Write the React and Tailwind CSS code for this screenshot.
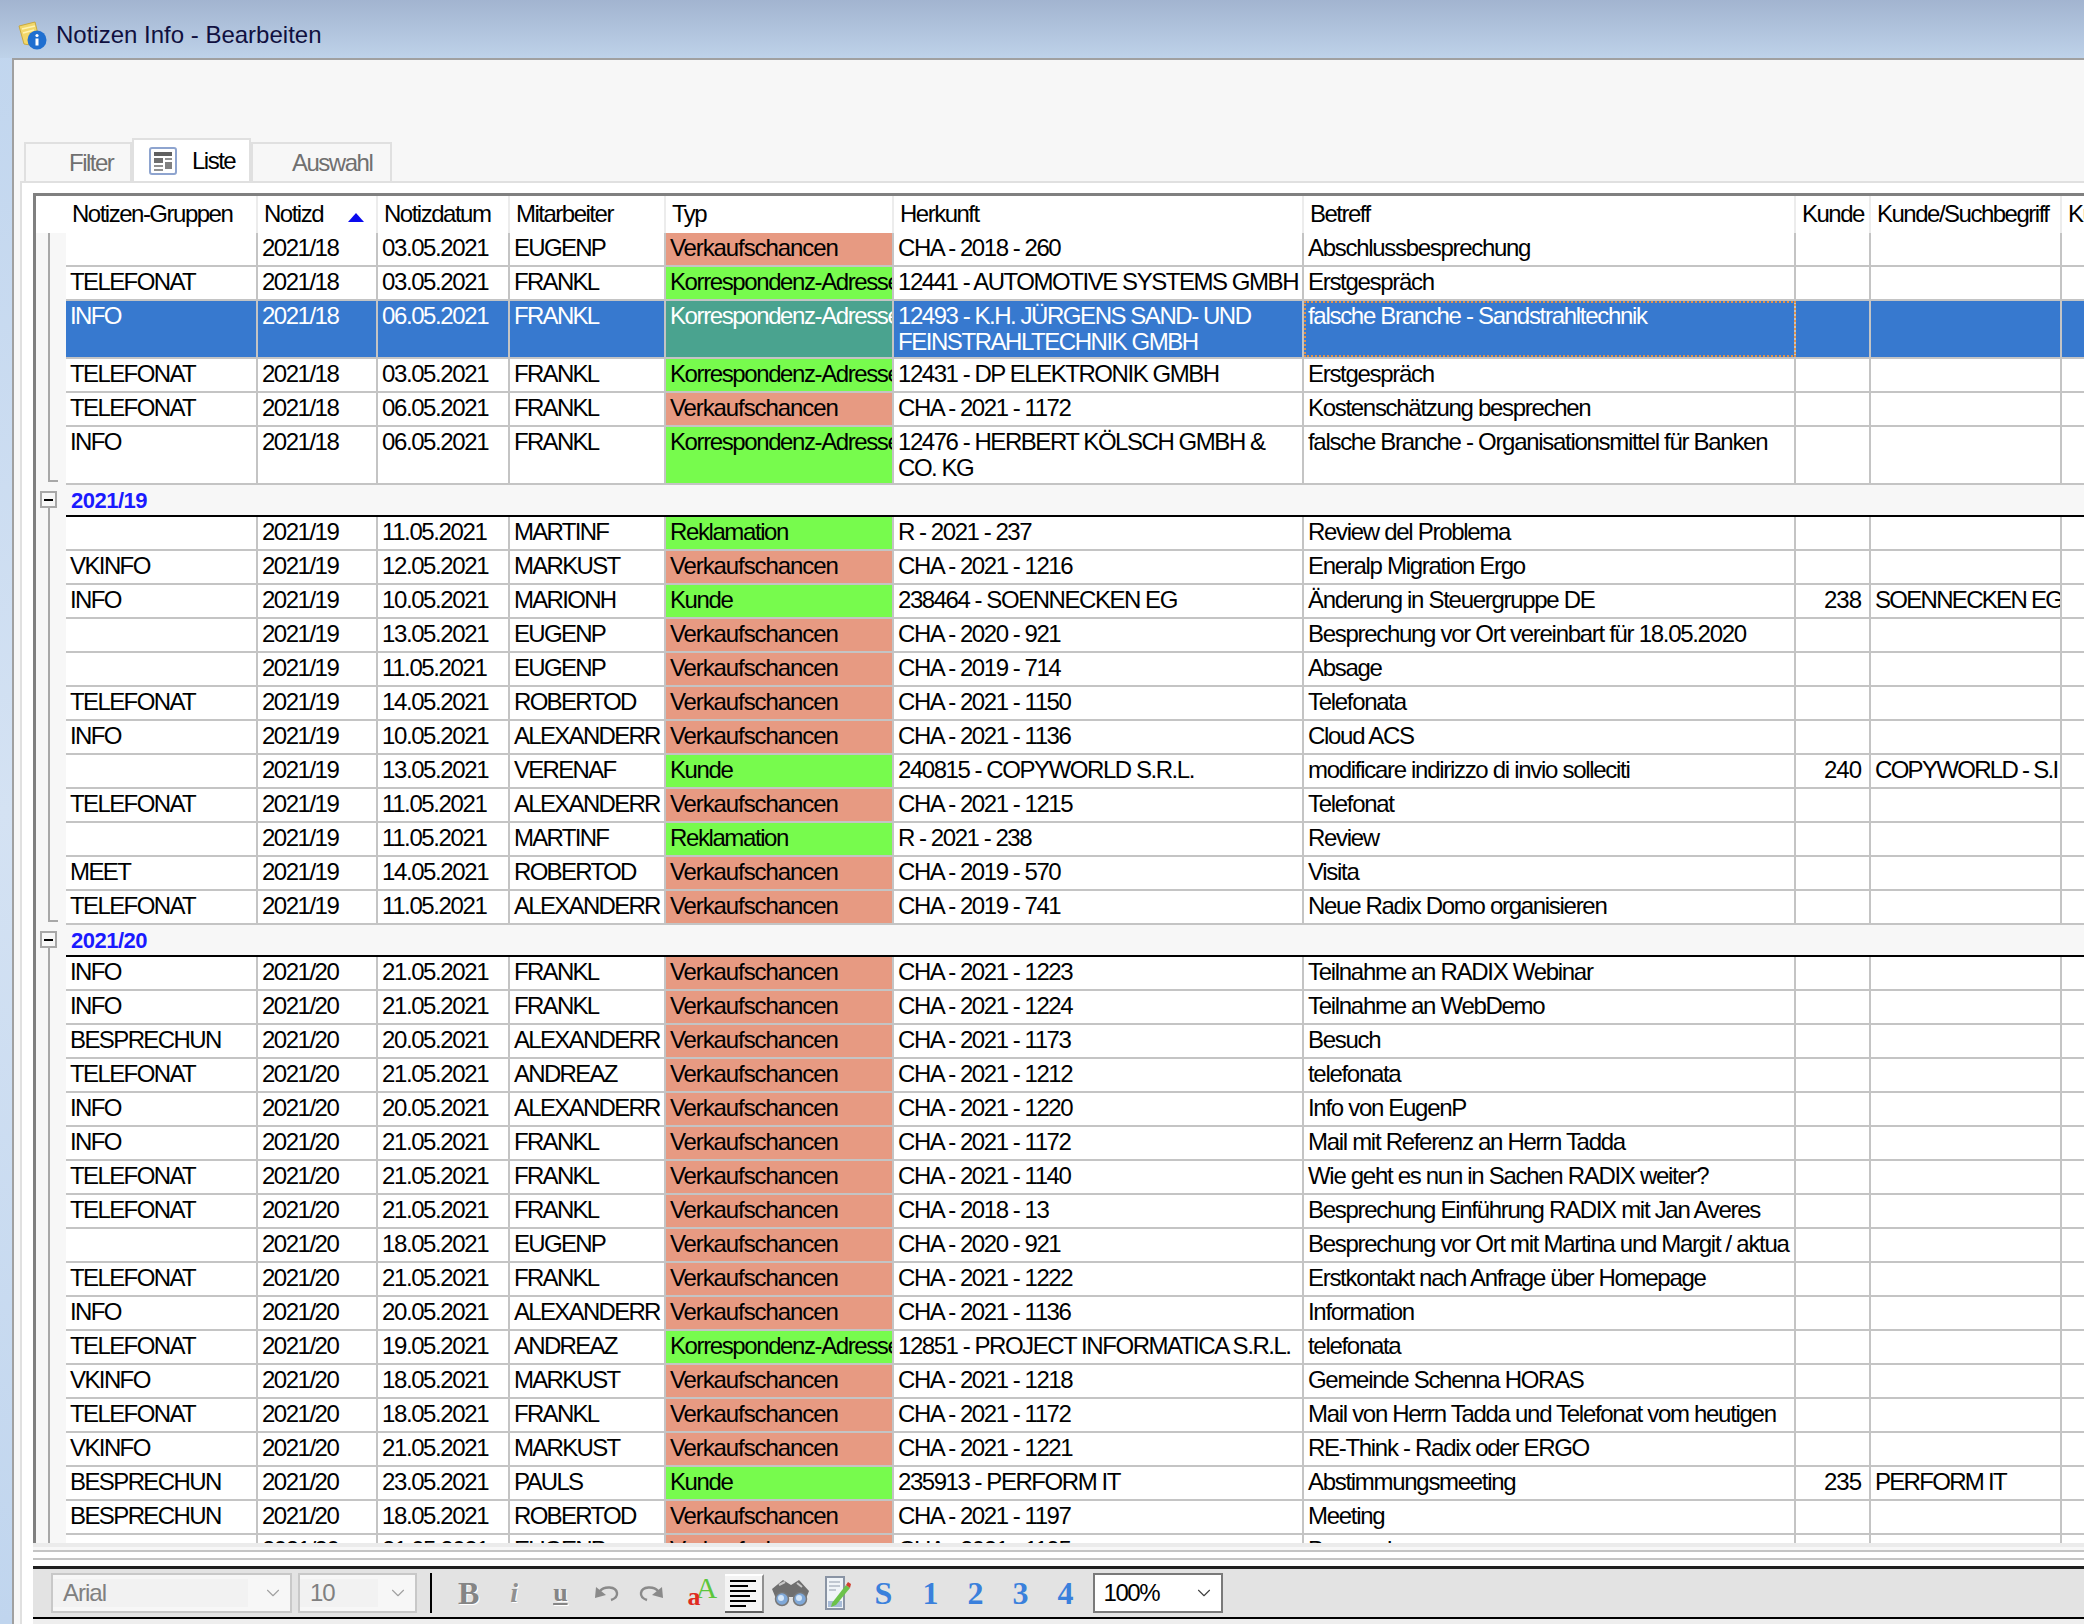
import React from 'react';
import { ChevronDown } from 'lucide-react';

const COLS = 'grid grid-cols-[192px_120px_132px_156px_228px_410px_492px_75px_191px_minmax(0,1fr)]';
const TEXT = "font-['Liberation_Sans',Arial,sans-serif] text-[24px] tracking-[-1px] leading-[26px]";

const V = 'Verkaufschancen';
const K = 'Korrespondenz-Adresse';
const R = 'Reklamation';
const U = 'Kunde';

const group18 = [
  ['', '2021/18', '03.05.2021', 'EUGENP', V, 'CHA - 2018 - 260', 'Abschlussbesprechung'],
  ['TELEFONAT', '2021/18', '03.05.2021', 'FRANKL', K, '12441 - AUTOMOTIVE SYSTEMS GMBH', 'Erstgespräch'],
  ['INFO', '2021/18', '06.05.2021', 'FRANKL', K, '12493 - K.H. JÜRGENS SAND- UND\nFEINSTRAHLTECHNIK GMBH', 'falsche Branche - Sandstrahltechnik'],
  ['TELEFONAT', '2021/18', '03.05.2021', 'FRANKL', K, '12431 - DP ELEKTRONIK GMBH', 'Erstgespräch'],
  ['TELEFONAT', '2021/18', '06.05.2021', 'FRANKL', V, 'CHA - 2021 - 1172', 'Kostenschätzung besprechen'],
  ['INFO', '2021/18', '06.05.2021', 'FRANKL', K, '12476 - HERBERT KÖLSCH GMBH &\nCO. KG', 'falsche Branche - Organisationsmittel für Banken'],
];

const group19 = [
  ['', '2021/19', '11.05.2021', 'MARTINF', R, 'R - 2021 - 237', 'Review del Problema'],
  ['VKINFO', '2021/19', '12.05.2021', 'MARKUST', V, 'CHA - 2021 - 1216', 'Eneralp Migration Ergo'],
  ['INFO', '2021/19', '10.05.2021', 'MARIONH', U, '238464 - SOENNECKEN EG', 'Änderung in Steuergruppe DE', '238', 'SOENNECKEN EG'],
  ['', '2021/19', '13.05.2021', 'EUGENP', V, 'CHA - 2020 - 921', 'Besprechung vor Ort vereinbart für 18.05.2020'],
  ['', '2021/19', '11.05.2021', 'EUGENP', V, 'CHA - 2019 - 714', 'Absage'],
  ['TELEFONAT', '2021/19', '14.05.2021', 'ROBERTOD', V, 'CHA - 2021 - 1150', 'Telefonata'],
  ['INFO', '2021/19', '10.05.2021', 'ALEXANDERR', V, 'CHA - 2021 - 1136', 'Cloud ACS'],
  ['', '2021/19', '13.05.2021', 'VERENAF', U, '240815 - COPYWORLD S.R.L.', 'modificare indirizzo di invio solleciti', '240', 'COPYWORLD - S.I'],
  ['TELEFONAT', '2021/19', '11.05.2021', 'ALEXANDERR', V, 'CHA - 2021 - 1215', 'Telefonat'],
  ['', '2021/19', '11.05.2021', 'MARTINF', R, 'R - 2021 - 238', 'Review'],
  ['MEET', '2021/19', '14.05.2021', 'ROBERTOD', V, 'CHA - 2019 - 570', 'Visita'],
  ['TELEFONAT', '2021/19', '11.05.2021', 'ALEXANDERR', V, 'CHA - 2019 - 741', 'Neue Radix Domo organisieren'],
];

const group20 = [
  ['INFO', '2021/20', '21.05.2021', 'FRANKL', V, 'CHA - 2021 - 1223', 'Teilnahme an RADIX Webinar'],
  ['INFO', '2021/20', '21.05.2021', 'FRANKL', V, 'CHA - 2021 - 1224', 'Teilnahme an WebDemo'],
  ['BESPRECHUN', '2021/20', '20.05.2021', 'ALEXANDERR', V, 'CHA - 2021 - 1173', 'Besuch'],
  ['TELEFONAT', '2021/20', '21.05.2021', 'ANDREAZ', V, 'CHA - 2021 - 1212', 'telefonata'],
  ['INFO', '2021/20', '20.05.2021', 'ALEXANDERR', V, 'CHA - 2021 - 1220', 'Info von EugenP'],
  ['INFO', '2021/20', '21.05.2021', 'FRANKL', V, 'CHA - 2021 - 1172', 'Mail mit Referenz an Herrn Tadda'],
  ['TELEFONAT', '2021/20', '21.05.2021', 'FRANKL', V, 'CHA - 2021 - 1140', 'Wie geht es nun in Sachen RADIX weiter?'],
  ['TELEFONAT', '2021/20', '21.05.2021', 'FRANKL', V, 'CHA - 2018 - 13', 'Besprechung Einführung RADIX mit Jan Averes'],
  ['', '2021/20', '18.05.2021', 'EUGENP', V, 'CHA - 2020 - 921', 'Besprechung vor Ort mit Martina und Margit / aktua'],
  ['TELEFONAT', '2021/20', '21.05.2021', 'FRANKL', V, 'CHA - 2021 - 1222', 'Erstkontakt nach Anfrage über Homepage'],
  ['INFO', '2021/20', '20.05.2021', 'ALEXANDERR', V, 'CHA - 2021 - 1136', 'Information'],
  ['TELEFONAT', '2021/20', '19.05.2021', 'ANDREAZ', K, '12851 - PROJECT INFORMATICA S.R.L.', 'telefonata'],
  ['VKINFO', '2021/20', '18.05.2021', 'MARKUST', V, 'CHA - 2021 - 1218', 'Gemeinde Schenna HORAS'],
  ['TELEFONAT', '2021/20', '18.05.2021', 'FRANKL', V, 'CHA - 2021 - 1172', 'Mail von Herrn Tadda und Telefonat vom heutigen'],
  ['VKINFO', '2021/20', '21.05.2021', 'MARKUST', V, 'CHA - 2021 - 1221', 'RE-Think - Radix oder ERGO'],
  ['BESPRECHUN', '2021/20', '23.05.2021', 'PAULS', U, '235913 - PERFORM IT', 'Abstimmungsmeeting', '235', 'PERFORM IT'],
  ['BESPRECHUN', '2021/20', '18.05.2021', 'ROBERTOD', V, 'CHA - 2021 - 1197', 'Meeting'],
  ['', '2021/20', '21.05.2021', 'EUGENP', V, 'CHA - 2021 - 1195', 'Besprechung'],
];

const Cell = ({ children, className = '' }) => (
  <div className={`overflow-hidden whitespace-pre border-r-2 border-[#c4c4c4] pl-[4px] pt-[2px] ${className}`}>{children}</div>
);

const typColor = (typ, selected) => {
  if (selected) return 'bg-[#4aa38f]';
  return typ === V ? 'bg-[#e79a82]' : 'bg-[#77fb4d]';
};

const Row = ({ row, selected, last, continued }) => {
  const tall = row[5].includes('\n');
  return (
    <div className={`flex ${tall ? 'h-[58px]' : 'h-[34px]'}`}>
      <div className="w-[30px] shrink-0 bg-[#f7f7f7] pl-[12px]">
        {last ? (
          <div className="h-[calc(100%-3px)] w-[10px] border-b-2 border-l-2 border-[#a8a8a8]" />
        ) : (
          continued && <div className="h-full w-[2px] bg-[#a8a8a8]" />
        )}
      </div>
      <div className={`${COLS} flex-1 border-b-2 border-[#c4c4c4] ${selected ? 'bg-[#3779cf] text-white' : 'bg-white text-black'}`}>
        <Cell className="tracking-[-1.6px]">{row[0]}</Cell>
        <Cell className="tracking-[-1.5px]">{row[1]}</Cell>
        <Cell className="tracking-[-1.4px]">{row[2]}</Cell>
        <Cell className="tracking-[-1.7px]">{row[3]}</Cell>
        <Cell className={`${typColor(row[4], selected)} ${row[4] === V ? 'tracking-[-1.1px]' : 'tracking-[-1.4px]'}`}>{row[4]}</Cell>
        <Cell className="tracking-[-1.45px]">{row[5]}</Cell>
        <Cell className={`tracking-[-1.3px] ${selected ? 'outline-2 -outline-offset-2 outline-dotted outline-[#e0924a]' : ''}`}>{row[6]}</Cell>
        <Cell className="pl-[28px]">{row[7]}</Cell>
        <Cell className="pl-[2px] tracking-[-1.7px]">{row[8]}</Cell>
        <div />
      </div>
    </div>
  );
};

const GroupHead = ({ label }) => (
  <div className="flex h-[32px]">
    <div className="flex w-[30px] shrink-0 flex-col bg-[#f7f7f7] pl-[4px] pt-[6px]">
      <div className="flex h-[17px] w-[17px] items-center justify-center border-2 border-[#a8a8a8] bg-[#f7f7f7]">
        <div className="h-[2px] w-[9px] bg-black" />
      </div>
      <div className="ml-[8px] w-[2px] flex-1 bg-[#a8a8a8]" />
    </div>
    <div className="flex-1 border-b-2 border-black bg-[#f7f7f7] pl-[5px] pt-[3px] font-bold text-[22px] leading-[26px] tracking-[-0.5px] text-[#1a1aff]">
      {label}
    </div>
  </div>
);

const headers = ['Notizen-Gruppen', 'Notizd', 'Notizdatum', 'Mitarbeiter', 'Typ', 'Herkunft', 'Betreff', 'Kunde', 'Kunde/Suchbegriff', 'Kunde'];

const GridHeader = () => (
  <div className="flex h-[37px] bg-white tracking-[-1.5px]">
    <div className="w-[30px] shrink-0" />
    <div className={`${COLS} flex-1`}>
      {headers.map((h, i) => (
        <div key={i} className="relative overflow-hidden whitespace-pre border-r-2 border-[#ececec] pl-[6px] pt-[5px] last:border-r-0">
          {h}
          {i === 1 && (
            <svg className="absolute left-[90px] top-[17px]" width="16" height="9" viewBox="0 0 16 9">
              <path d="M8 0 L16 9 L0 9 Z" fill="#0a0aee" />
            </svg>
          )}
        </div>
      ))}
    </div>
  </div>
);

const NoteIcon = () => (
  <svg width="30" height="30" viewBox="0 0 30 30" className="shrink-0">
    <path d="M1 6 L17 2 L20 14 L12 25 L6 24 Z" fill="#f1d76a" stroke="#c9a93f" />
    <path d="M4 9 L17 6 M5 13 L16 10" stroke="#fff3b0" strokeWidth="1.5" />
    <circle cx="19" cy="20" r="9.5" fill="#1f6fd0" />
    <circle cx="19" cy="15.5" r="1.6" fill="#fff" />
    <rect x="17.5" y="18.5" width="3" height="7" fill="#fff" />
  </svg>
);

const ListIcon = () => (
  <svg width="28" height="28" viewBox="0 0 28 28">
    <rect x="1" y="1" width="26" height="26" rx="2" fill="#fff" stroke="#8ea4cf" strokeWidth="2" />
    <rect x="5" y="5" width="18" height="4" fill="#606060" />
    <rect x="5" y="11" width="9" height="5" fill="#707070" />
    <rect x="16" y="11" width="7" height="2" fill="#909090" />
    <rect x="16" y="15" width="7" height="7" fill="#808080" />
    <rect x="5" y="18" width="9" height="2" fill="#909090" />
    <rect x="5" y="22" width="9" height="2" fill="#909090" />
  </svg>
);

const Tab = ({ label, className, children }) => (
  <div className={`flex items-center border-x-2 border-t-2 border-[#e0e0e0] tracking-[-1.5px] ${className}`}>
    {children}
    {label}
  </div>
);

const Combo = ({ label, className, inner, dim }) => (
  <div className={`flex h-[40px] items-center justify-between ${className}`}>
    <div className={`flex h-[28px] items-center ${inner}`}>{label}</div>
    <ChevronDown size={22} strokeWidth={1.2} className={dim ? 'mr-[6px] text-[#a0a0a0]' : 'mr-[6px] text-[#404040]'} />
  </div>
);

const Undo = ({ flip }) => (
  <svg width="26" height="20" viewBox="0 0 26 20" className={flip ? '-scale-x-100' : ''}>
    <path d="M6 8 C10 3 22 3 23 10 C23.5 14 20 16 17 17" fill="none" stroke="#8a8a8a" strokeWidth="2.4" />
    <path d="M1 15 L2 4 L12 12 Z" fill="#8a8a8a" />
  </svg>
);

const Binoculars = () => (
  <svg width="42" height="32" viewBox="0 0 42 32">
    <path d="M3 12 L14 3 L22 8 L30 3 L40 14 L36 24 L26 20 L18 20 L8 24 Z" fill="#6f6f6f" />
    <path d="M10 8 L16 5 M28 6 L33 10" stroke="#c8c8c8" strokeWidth="2" />
    <circle cx="13" cy="22" r="6.5" fill="#7fa8d8" stroke="#777" strokeWidth="1.5" />
    <circle cx="31" cy="22" r="6.5" fill="#7fa8d8" stroke="#777" strokeWidth="1.5" />
    <circle cx="12" cy="21" r="3" fill="#d4e6f8" />
    <circle cx="30" cy="21" r="3" fill="#d4e6f8" />
  </svg>
);

const DocPencil = () => (
  <svg width="28" height="36" viewBox="0 0 28 36">
    <path d="M2 2 H20 V34 H2 Z" fill="#f0f4f8" stroke="#8a94a4" strokeWidth="2" />
    <path d="M5 7 H16 M5 11 H16 M5 15 H12" stroke="#b0b8c4" strokeWidth="1.5" />
    <rect x="4" y="26" width="14" height="6" fill="#a8bcd8" />
    <path d="M8 28 L22 10 L26 13 L12 30 L7 32 Z" fill="#6cc24a" />
    <path d="M22 10 L26 13 L27 9 L24 7 Z" fill="#d04030" />
  </svg>
);

const AlignLeft = () => (
  <div className="flex h-[39px] w-[39px] flex-col justify-center gap-[3px] border-b-2 border-r-2 border-t-2 border-b-[#606060] border-r-[#909090] border-t-white bg-[#f4f4f4] pl-[5px]">
    <div className="h-[2px] w-[26px] bg-black" />
    <div className="h-[2px] w-[18px] bg-black" />
    <div className="h-[2px] w-[26px] bg-black" />
    <div className="h-[2px] w-[20px] bg-black" />
    <div className="h-[2px] w-[26px] bg-black" />
    <div className="h-[2px] w-[16px] bg-black" />
  </div>
);

const Toolbar = () => (
  <div className="flex h-[53px] items-center border-b-2 border-t-[3px] border-b-black border-t-[#202020] bg-[#e3e3e3] pl-[18px]">
    <Combo
      label="Arial"
      dim
      className="w-[241px] border-2 border-[#c8c8c8] bg-[#f7f7f7] text-[#808080]"
      inner="w-[195px] bg-[#f2f2f2] pl-[10px]"
    />
    <Combo
      label="10"
      dim
      className="ml-[6px] w-[119px] border-2 border-[#c8c8c8] bg-[#f7f7f7] text-[#808080]"
      inner="w-[78px] bg-[#f2f2f2] pl-[10px]"
    />
    <div className="ml-[13px] h-[40px] w-[2px] bg-black" />
    <span className="ml-[26px] font-['Liberation_Serif',serif] text-[32px] font-bold tracking-normal text-[#858585] [text-shadow:1px_1px_0_#fff]">B</span>
    <span className="ml-[31px] font-['Liberation_Serif',serif] text-[28px] font-bold italic tracking-normal text-[#909090] [text-shadow:1px_1px_0_#fff]">i</span>
    <span className="ml-[35px] font-['Liberation_Serif',serif] text-[26px] font-bold tracking-normal text-[#858585] underline [text-shadow:1px_1px_0_#fff]">u</span>
    <div className="ml-[26px]"><Undo /></div>
    <div className="ml-[18px]"><Undo flip /></div>
    <div className="relative ml-[24px] h-[30px] w-[30px] font-['Liberation_Serif',serif] tracking-normal">
      <span className="absolute left-[8px] top-[-3px] text-[30px] text-[#5cc63c]">A</span>
      <span className="absolute left-0 top-[6px] text-[26px] font-bold text-[#e02a20]">a</span>
    </div>
    <div className="ml-[7px]"><AlignLeft /></div>
    <div className="ml-[5px]"><Binoculars /></div>
    <div className="ml-[13px]"><DocPencil /></div>
    <div className="flex font-['Liberation_Serif',serif] text-[32px] font-bold tracking-normal text-[#3a80dc]">
      <span className="ml-[23px] w-[17px]">S</span>
      <span className="ml-[31px] w-[14px]">1</span>
      <span className="ml-[31px] w-[14px]">2</span>
      <span className="ml-[31px] w-[15px]">3</span>
      <span className="ml-[30px] w-[14px]">4</span>
    </div>
    <Combo
      label="100%"
      className="ml-[21px] w-[130px] border-2 border-[#7a7a7a] bg-white text-black"
      inner="ml-[9px] w-[60px] tracking-[-1.5px]"
    />
  </div>
);

export default function App() {
  return (
    <div className={`flex h-[1624px] w-[2084px] flex-col overflow-hidden bg-gradient-to-b from-[#c0d5ee] via-[#d4e2f3] to-[#c0d5ee] ${TEXT}`}>
      <div className="flex h-[58px] shrink-0 items-center gap-[8px] bg-gradient-to-b from-[#a2b4d0] to-[#bed2e9] pl-[18px] pt-[12px] text-[#101040]">
        <NoteIcon />
        <span className="tracking-normal">Notizen Info - Bearbeiten</span>
      </div>

      <div className="ml-[12px] flex flex-1 flex-col border-l-2 border-t-2 border-[#a0a0a0] bg-[#f7f7f7]">
        <div className="h-[78px]" />

        <div className="flex h-[43px] items-end pl-[10px]">
          <Tab label="Filter" className="h-[39px] w-[108px] pl-[43px] text-[#707070]" />
          <Tab label="Liste" className="h-[43px] w-[119px] gap-[15px] bg-white pl-[15px] text-black">
            <ListIcon />
          </Tab>
          <Tab label="Auswahl" className="h-[39px] w-[141px] pl-[39px] text-[#707070]" />
        </div>

        <div className="ml-[6px] flex flex-1 flex-col border-l-2 border-t-2 border-[#e0e0e0] bg-white pl-[11px] pt-[10px]">
          <div className="h-[1350px] overflow-hidden border-l-[3px] border-t-[3px] border-[#808080]">
            <GridHeader />
            {group18.map((row, i) => (
              <Row key={i} row={row} selected={i === 2} continued last={i === group18.length - 1} />
            ))}
            <GroupHead label="2021/19" />
            {group19.map((row, i) => (
              <Row key={i} row={row} continued last={i === group19.length - 1} />
            ))}
            <GroupHead label="2021/20" />
            {group20.map((row, i) => (
              <Row key={i} row={row} continued />
            ))}
          </div>
          <div className="h-[7px] border-t-[4px] border-[#ebebeb] bg-[#f7f7f7]" />
          <div className="h-[8px] border-t-2 border-[#c4c4c4]" />
          <div className="h-[8px] border-t-2 border-[#c4c4c4]" />
          <Toolbar />
          <div className="flex-1 bg-[#eeeeee]" />
        </div>
      </div>
    </div>
  );
}
